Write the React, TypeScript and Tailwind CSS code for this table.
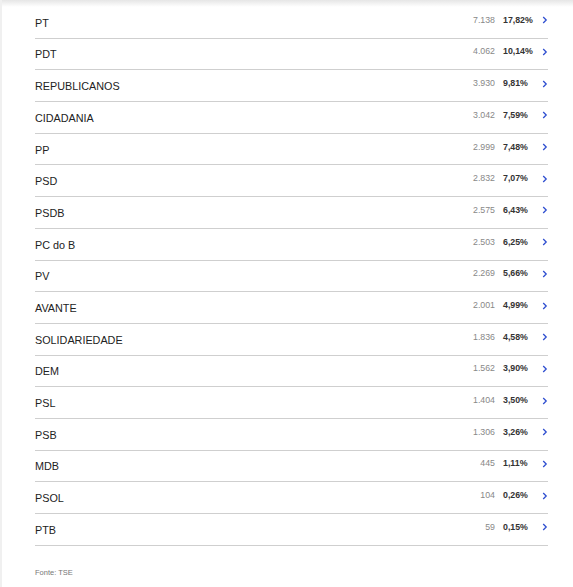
const parties = [
  { name: 'PT', votes: '7.138', pct: '17,82%' },
  { name: 'PDT', votes: '4.062', pct: '10,14%' },
  { name: 'REPUBLICANOS', votes: '3.930', pct: '9,81%' },
  { name: 'CIDADANIA', votes: '3.042', pct: '7,59%' },
  { name: 'PP', votes: '2.999', pct: '7,48%' },
  { name: 'PSD', votes: '2.832', pct: '7,07%' },
  { name: 'PSDB', votes: '2.575', pct: '6,43%' },
  { name: 'PC do B', votes: '2.503', pct: '6,25%' },
  { name: 'PV', votes: '2.269', pct: '5,66%' },
  { name: 'AVANTE', votes: '2.001', pct: '4,99%' },
  { name: 'SOLIDARIEDADE', votes: '1.836', pct: '4,58%' },
  { name: 'DEM', votes: '1.562', pct: '3,90%' },
  { name: 'PSL', votes: '1.404', pct: '3,50%' },
  { name: 'PSB', votes: '1.306', pct: '3,26%' },
  { name: 'MDB', votes: '445', pct: '1,11%' },
  { name: 'PSOL', votes: '104', pct: '0,26%' },
  { name: 'PTB', votes: '59', pct: '0,15%' },
]

function Chevron() {
  return (
    <svg width="6" height="8" viewBox="0 0 6 8" className="flex-shrink-0">
      <polyline points="1.2,1 4.2,4 1.2,7" fill="none" stroke="#2f4fd0" strokeWidth="1.3" />
    </svg>
  )
}

export default function App() {
  return (
    <div className="w-[573px] h-[587px] bg-white flex font-['Liberation_Sans',Arial,sans-serif]">
      <div className="w-[2px] bg-[#f0f0f0]" />
      <div className="flex-1 flex flex-col">
        <div className="h-[7px] bg-gradient-to-b from-[#e6e6e6] to-white" />
        <ul className="pl-[33px] pr-[25px]">
          {parties.map((p) => (
            <li
              key={p.name}
              className="h-[31.7px] flex items-center justify-between border-b border-[#cfcfcf]"
            >
              <span className="text-[10.8px] text-[#222] pt-[1px]">{p.name}</span>
              <div className="flex items-center pb-[4px]">
                <span className="text-[8.8px] text-[#888] text-right">{p.votes}</span>
                <span className="ml-[8px] w-[39px] text-[8.8px] font-semibold text-[#333]">{p.pct}</span>
                <Chevron />
              </div>
            </li>
          ))}
        </ul>
        <p className="pl-[33px] mt-[21px] text-[7.5px] text-[#777]">Fonte: TSE</p>
      </div>
    </div>
  )
}
